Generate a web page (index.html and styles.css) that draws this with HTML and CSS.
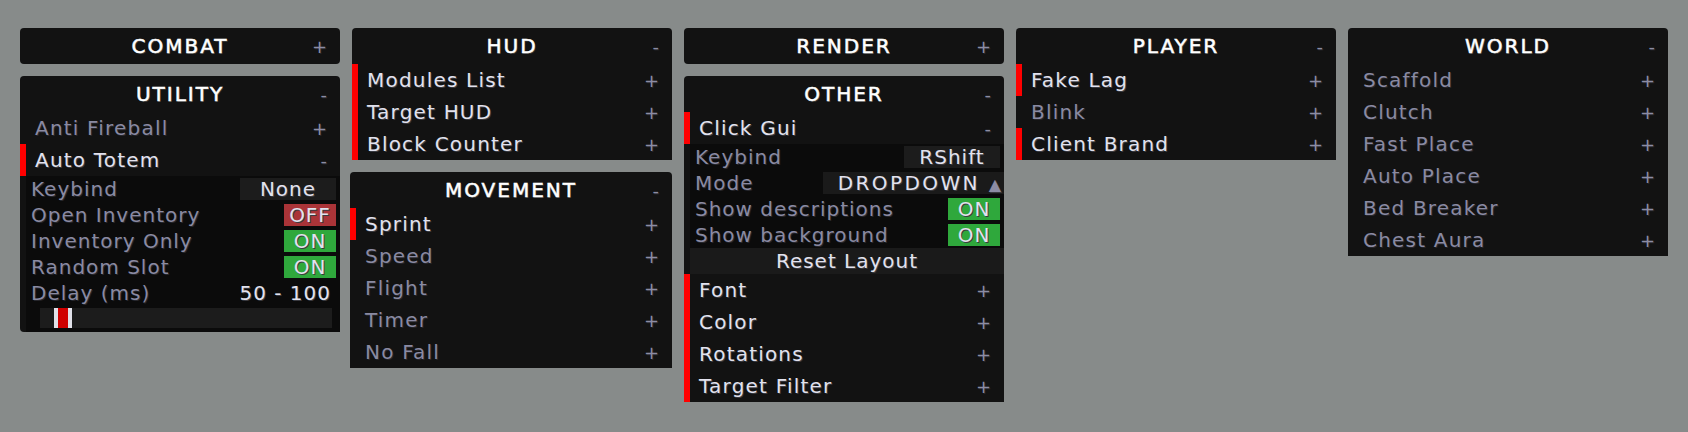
FILE: index.html
```html
<!DOCTYPE html>
<html lang="en">
<head>
    <meta charset="UTF-8">
    <meta name="viewport" content="width=device-width, initial-scale=1.0">
    <title>Click Gui</title>
    <link rel="stylesheet" href="styles.css">
</head>
<body>
    <div class="screen">
        <!-- column 1 -->
        <div class="column">
            <div class="panel closed">
                <div class="head"><span class="title">COMBAT</span><span class="sign">+</span></div>
            </div>
            <div class="panel rounded">
                <div class="head"><span class="title">UTILITY</span><span class="sign">-</span></div>
                <div class="module">Anti Fireball<span class="sign">+</span></div>
                <div class="module on">Auto Totem<span class="sign">-</span></div>
                <div class="settings">
                    <div class="setting">Keybind<span class="box">None</span></div>
                    <div class="setting">Open Inventory<span class="toggle off">OFF</span></div>
                    <div class="setting">Inventory Only<span class="toggle">ON</span></div>
                    <div class="setting">Random Slot<span class="toggle">ON</span></div>
                    <div class="setting">Delay (ms)<span class="value">50 - 100</span></div>
                    <div class="slider-row">
                        <div class="slider">
                            <div class="handle"></div>
                        </div>
                    </div>
                </div>
            </div>
        </div>

        <!-- column 2 -->
        <div class="column">
            <div class="panel">
                <div class="head"><span class="title">HUD</span><span class="sign">-</span></div>
                <div class="module on">Modules List<span class="sign">+</span></div>
                <div class="module on">Target HUD<span class="sign">+</span></div>
                <div class="module on">Block Counter<span class="sign">+</span></div>
            </div>
            <div class="panel moved">
                <div class="head"><span class="title">MOVEMENT</span><span class="sign">-</span></div>
                <div class="module on">Sprint<span class="sign">+</span></div>
                <div class="module">Speed<span class="sign">+</span></div>
                <div class="module">Flight<span class="sign">+</span></div>
                <div class="module">Timer<span class="sign">+</span></div>
                <div class="module">No Fall<span class="sign">+</span></div>
            </div>
        </div>

        <!-- column 3 -->
        <div class="column">
            <div class="panel closed">
                <div class="head"><span class="title">RENDER</span><span class="sign">+</span></div>
            </div>
            <div class="panel">
                <div class="head"><span class="title">OTHER</span><span class="sign">-</span></div>
                <div class="module on">Click Gui<span class="sign">-</span></div>
                <div class="settings">
                    <div class="setting">Keybind<span class="box">RShift</span></div>
                    <div class="setting">Mode<span class="dropdown">DROPDOWN <span class="arrow">&#9650;</span></span></div>
                    <div class="setting">Show descriptions<span class="toggle">ON</span></div>
                    <div class="setting">Show background<span class="toggle">ON</span></div>
                    <div class="reset">Reset Layout</div>
                </div>
                <div class="module on">Font<span class="sign">+</span></div>
                <div class="module on">Color<span class="sign">+</span></div>
                <div class="module on">Rotations<span class="sign">+</span></div>
                <div class="module on">Target Filter<span class="sign">+</span></div>
            </div>
        </div>

        <!-- column 4 -->
        <div class="column">
            <div class="panel">
                <div class="head"><span class="title">PLAYER</span><span class="sign">-</span></div>
                <div class="module on">Fake Lag<span class="sign">+</span></div>
                <div class="module">Blink<span class="sign">+</span></div>
                <div class="module on">Client Brand<span class="sign">+</span></div>
            </div>
        </div>

        <!-- column 5 -->
        <div class="column">
            <div class="panel">
                <div class="head"><span class="title">WORLD</span><span class="sign">-</span></div>
                <div class="module">Scaffold<span class="sign">+</span></div>
                <div class="module">Clutch<span class="sign">+</span></div>
                <div class="module">Fast Place<span class="sign">+</span></div>
                <div class="module">Auto Place<span class="sign">+</span></div>
                <div class="module">Bed Breaker<span class="sign">+</span></div>
                <div class="module">Chest Aura<span class="sign">+</span></div>
            </div>
        </div>
    </div>
</body>
</html>
```

FILE: styles.css
```css
body{
    margin:0;
    padding:0;
    background-color:#878b8a;
    font-family:"DejaVu Sans", sans-serif;
}
.screen{
    display:flex;
    gap:12px;
    padding:28px 20px;
    align-items:flex-start;
}
.column{
    width:320px;
    display:flex;
    flex-direction:column;
    gap:12px;
}
.panel{
    background-color:#121212;
    border-radius:4px 4px 0 0;
}
.panel.closed{
    border-radius:4px;
}
.panel.rounded{
    border-radius:4px;
}
.panel.moved{
    margin-left:-2px;
}
.head{
    height:36px;
    display:grid;
    grid-template-columns:1fr auto 1fr;
    align-items:center;
}
.head .title{
    grid-column:2;
    color:#ffffff;
    font-size:20px;
    letter-spacing:2px;
    -webkit-text-stroke:0.5px #ffffff;
    text-shadow:1px 1px 0 #3c3c3c;
}
.head .sign{
    justify-self:end;
    padding-right:13px;
}
.sign{
    color:#8c8ca4;
    font-size:18px;
    letter-spacing:0;
    text-shadow:1px 1px 0 #26262c;
}
.module{
    height:32px;
    display:flex;
    align-items:center;
    justify-content:space-between;
    padding:0 13px 0 15px;
    font-size:20px;
    letter-spacing:1.2px;
    color:#8a8aa2;
    text-shadow:1px 1px 0 #26262c;
}
.module.on{
    color:#e2e2ee;
    text-shadow:1px 1px 0 #3a3a40;
    box-shadow:inset 6px 0 0 #ff0000;
}
.settings{
    margin-left:6px;
    background-color:#0b0b0b;
}
.setting{
    height:26px;
    display:flex;
    align-items:center;
    justify-content:space-between;
    padding-left:5px;
    padding-right:4px;
    font-size:20px;
    letter-spacing:1px;
    color:#8a8aa2;
    text-shadow:1px 1px 0 #26262c;
}
.box, .toggle, .dropdown, .value{
    color:#e2e2ee;
    text-shadow:1px 1px 0 #3a3a40;
}
.box{
    width:96px;
    height:22px;
    line-height:22px;
    text-align:center;
    background-color:#1c1c1c;
}
.toggle{
    width:52px;
    height:22px;
    line-height:22px;
    text-align:center;
    background-color:#2fa83c;
}
.toggle.off{
    background-color:#aa3438;
}
.value{
    padding-right:5px;
}
.setting .dropdown{
    width:181px;
    height:22px;
    line-height:22px;
    box-sizing:border-box;
    text-align:right;
    padding-right:3px;
    margin-right:-4px;
    letter-spacing:2.4px;
    background-color:#1a1a1a;
}
.arrow{
    color:#8c8ca4;
    font-size:16px;
    letter-spacing:0;
}
.reset{
    height:26px;
    line-height:26px;
    text-align:center;
    background-color:#1a1a1a;
    font-size:20px;
    letter-spacing:1px;
    color:#e2e2ee;
    text-shadow:1px 1px 0 #3a3a40;
}
.slider-row{
    height:26px;
    padding:2px 8px 4px 14px;
    box-sizing:border-box;
}
.slider{
    height:20px;
    background-color:#1c1c1c;
    padding-left:14px;
}
.handle{
    width:10px;
    height:20px;
    background-color:#d00000;
    border-left:4px solid #e0e0e8;
    border-right:4px solid #e0e0e8;
}
```
